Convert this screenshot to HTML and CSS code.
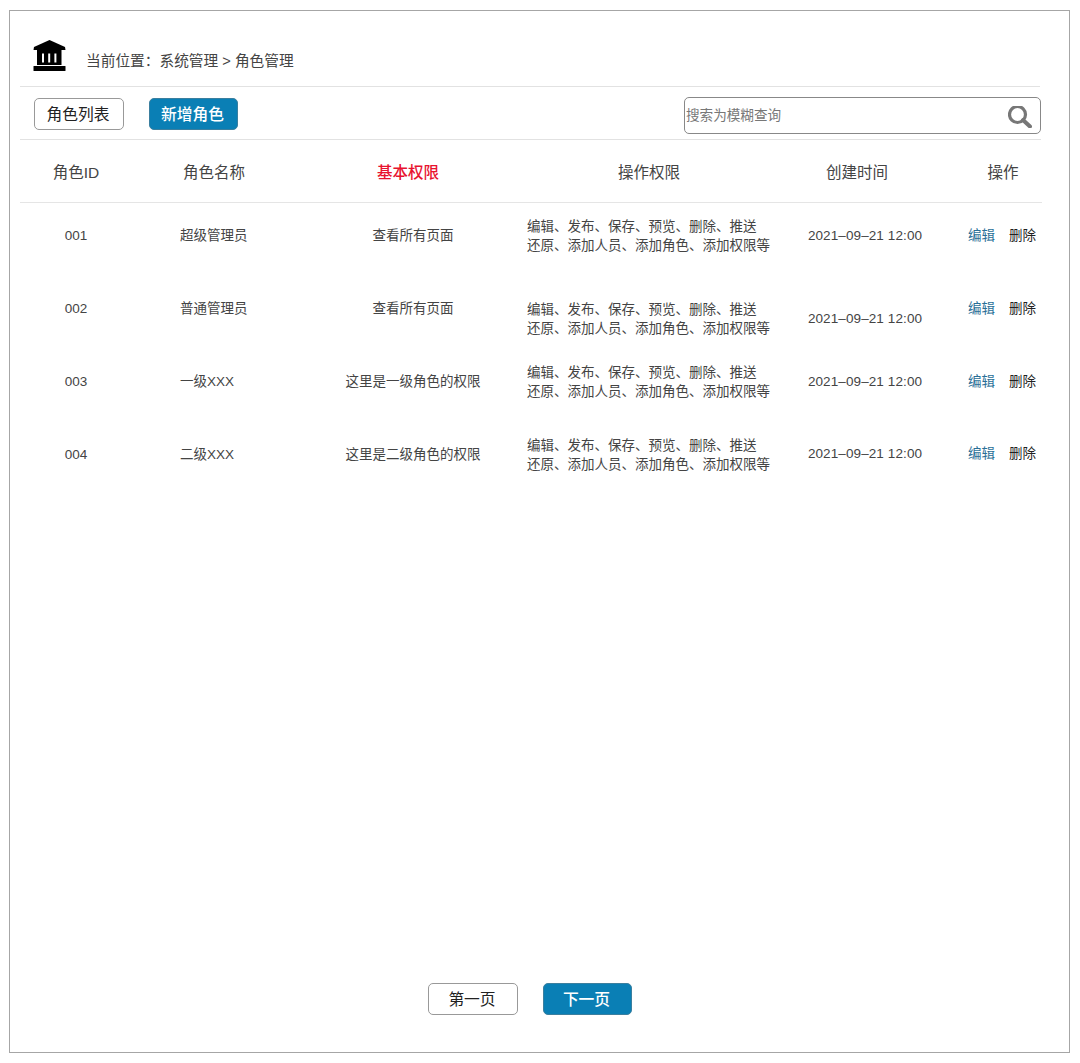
FILE: index.html
```html
<!DOCTYPE html>
<html lang="zh-CN">
<head>
    <meta charset="UTF-8">
    <meta name="viewport" content="width=device-width, initial-scale=1.0">
    <title>角色管理</title>
    <link rel="stylesheet" href="styles.css">
</head>
<body>
    <div class="frame">
        <div class="crumb">
            <svg class="crumb-icon" viewBox="0 0 33 31" width="33" height="31">
                <path d="M16.5 0 L32 7 L32.5 10 L0.5 10 L1 7 Z" fill="#000"/>
                <path fill-rule="evenodd" d="M4 10 H28.5 V25 H4 Z M9 13.5 V22.5 H11 V13.5 Z M15.2 13.5 V22.5 H17.2 V13.5 Z M21.4 13.5 V22.5 H23.4 V13.5 Z" fill="#000"/>
                <rect x="0.5" y="26" width="32" height="5" rx="0.5" fill="#000"/>
            </svg>
            <span class="crumb-text">当前位置：系统管理 &gt; 角色管理</span>
        </div>

        <div class="toolbar">
            <button class="btn" type="button">角色列表</button>
            <button class="btn btn-primary" type="button">新增角色</button>
            <div class="search">
                <input class="search-input" type="text" placeholder="搜索为模糊查询">
                <svg class="search-icon" viewBox="0 0 24 22" width="24" height="22">
                    <circle cx="9.5" cy="8.5" r="8" fill="none" stroke="#777" stroke-width="3.2"/>
                    <path d="M15 14 L22 20.5" fill="none" stroke="#777" stroke-width="4" stroke-linecap="round"/>
                </svg>
            </div>
        </div>

        <div class="table-head">
            <div>角色ID</div>
            <div class="head-shift">角色名称</div>
            <div class="head-red">基本权限</div>
            <div class="head-shift">操作权限</div>
            <div class="head-shift">创建时间</div>
            <div class="head-ops">操作</div>
        </div>

        <div class="table-body">
            <div class="row">
                <div class="c-id">001</div>
                <div class="c-name">超级管理员</div>
                <div class="c-basic">查看所有页面</div>
                <div class="c-perm">编辑、发布、保存、预览、删除、推送<br>还原、添加人员、添加角色、添加权限等</div>
                <div class="c-time">2021–09–21 12:00</div>
                <div class="c-ops"><a class="op-edit">编辑</a><a class="op-del">删除</a></div>
            </div>
            <div class="row">
                <div class="c-id">002</div>
                <div class="c-name">普通管理员</div>
                <div class="c-basic">查看所有页面</div>
                <div class="c-perm low">编辑、发布、保存、预览、删除、推送<br>还原、添加人员、添加角色、添加权限等</div>
                <div class="c-time low-time">2021–09–21 12:00</div>
                <div class="c-ops"><a class="op-edit">编辑</a><a class="op-del">删除</a></div>
            </div>
            <div class="row">
                <div class="c-id">003</div>
                <div class="c-name">一级XXX</div>
                <div class="c-basic">这里是一级角色的权限</div>
                <div class="c-perm">编辑、发布、保存、预览、删除、推送<br>还原、添加人员、添加角色、添加权限等</div>
                <div class="c-time">2021–09–21 12:00</div>
                <div class="c-ops"><a class="op-edit">编辑</a><a class="op-del">删除</a></div>
            </div>
            <div class="row">
                <div class="c-id">004</div>
                <div class="c-name">二级XXX</div>
                <div class="c-basic">这里是二级角色的权限</div>
                <div class="c-perm">编辑、发布、保存、预览、删除、推送<br>还原、添加人员、添加角色、添加权限等</div>
                <div class="c-time high">2021–09–21 12:00</div>
                <div class="c-ops high"><a class="op-edit">编辑</a><a class="op-del">删除</a></div>
            </div>
        </div>

        <div class="pager">
            <button class="btn" type="button">第一页</button>
            <button class="btn btn-primary" type="button">下一页</button>
        </div>
    </div>
</body>
</html>
```

FILE: styles.css
```css
body {
    font-family: "Liberation Sans", "Noto Sans CJK SC", sans-serif;
    background-color: #fff;
    color: #444;
    margin: 0;
}
.frame {
    box-sizing: border-box;
    width: 1061px;
    height: 1043px;
    margin: 10px 0 0 9px;
    padding: 0 27px 0 10px;
    border: 1px solid #a6a6a6;
    display: flex;
    flex-direction: column;
}
.crumb {
    display: flex;
    align-items: flex-end;
    gap: 20px;
    padding: 29px 0 15px 13px;
    margin-right: 2px;
    border-bottom: 1px solid #e2e2e2;
}
.crumb-icon {
    display: block;
}
.crumb-text {
    font-size: 14.7px;
    line-height: 20px;
    color: #444;
}
.toolbar {
    box-sizing: border-box;
    display: flex;
    align-items: flex-start;
    gap: 25px;
    height: 53px;
    padding: 10px 0 0 14px;
    margin-right: 1px;
    border-bottom: 1px solid #e2e2e2;
}
.toolbar .btn {
    margin-top: 1px;
}
.btn {
    box-sizing: border-box;
    width: 90px;
    height: 32px;
    padding: 0 2px 2px 0;
    font-family: inherit;
    font-size: 15.75px;
    color: #222;
    background-color: #fff;
    border: 1px solid #999;
    border-radius: 5px;
}
.btn-primary {
    width: 89px;
    color: #fff;
    font-weight: 500;
    background-color: #0a7fb5;
    border-color: #3b7f9f;
}
.search {
    box-sizing: border-box;
    display: flex;
    align-items: center;
    width: 357px;
    height: 37px;
    margin-left: auto;
    padding: 0 8px 0 1px;
    border: 1px solid #888;
    border-radius: 5px;
}
.search-input {
    flex: 1;
    min-width: 0;
    padding: 0;
    border: none;
    outline: none;
    font-family: inherit;
    font-size: 13.6px;
}
.search-input::placeholder {
    color: #777;
    opacity: 1;
}
.search-icon {
    display: block;
    margin-top: 2px;
}
.table-head,
.row {
    display: grid;
    grid-template-columns: 112px 162px 228px 252px 164px 104px;
    align-items: center;
}
.table-head {
    box-sizing: border-box;
    height: 63px;
    font-size: 15.5px;
    text-align: center;
    color: #444;
    border-bottom: 1px solid #e5e5e5;
}
.head-shift {
    padding-left: 2px;
}
.head-red {
    color: #e8132f;
    font-weight: 500;
}
.head-ops {
    padding-left: 26px;
}
.table-body {
    display: grid;
    grid-auto-rows: 66px;
    row-gap: 7px;
    font-size: 13.5px;
    line-height: 19px;
}
.c-id,
.c-name,
.c-basic,
.c-time,
.c-ops {
    margin-bottom: 2px;
}
.c-id {
    text-align: center;
}
.c-name {
    padding-left: 48px;
}
.c-basic {
    padding-left: 10px;
    text-align: center;
}
.c-perm {
    padding-left: 5px;
}
.c-time {
    padding-left: 18px;
    text-align: center;
    letter-spacing: 0.1px;
}
.c-ops {
    padding-left: 30px;
    white-space: nowrap;
}
.low {
    margin-top: 20px;
}
.low-time {
    margin-top: 20px;
}
.high {
    margin-bottom: 4px;
}
.op-edit {
    color: #2a6f97;
    margin-right: 14px;
}
.op-del {
    color: #222;
}
.pager {
    display: flex;
    justify-content: center;
    gap: 25px;
    margin-top: auto;
    padding: 0 2px 37px 0;
}
```
